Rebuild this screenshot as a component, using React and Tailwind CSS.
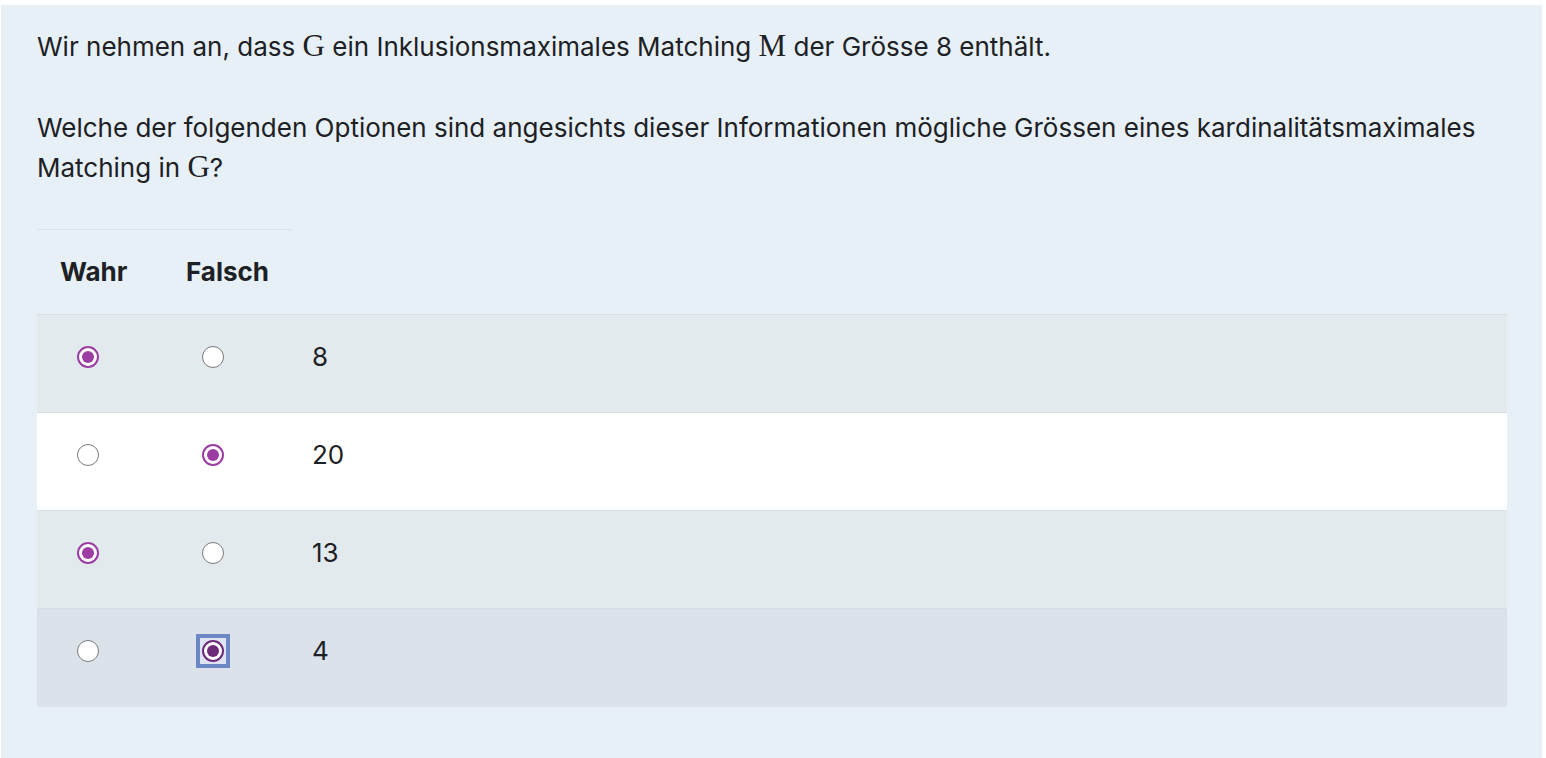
import React from "react";

const rows = [
  { label: "8", value: "wahr", bg: "bg-[#e2eaee]" },
  { label: "20", value: "falsch", bg: "bg-white" },
  { label: "13", value: "wahr", bg: "bg-[#e2eaee]" },
  { label: "4", value: "falsch", bg: "bg-[#dbe2ea]", focus: true },
];

const Math = ({ children }) => (
  <span className="font-['Liberation_Serif',serif] text-[31px] leading-none">{children}</span>
);

const Radio = ({ checked, focus }) => {
  if (!checked) {
    return <span className="block w-[22px] h-[22px] rounded-full border-[1.5px] border-[#7a7a7a] bg-white" />;
  }
  const dot = (
    <span
      className={
        "flex items-center justify-center w-[22px] h-[22px] rounded-full border-2 bg-white " +
        (focus ? "border-[#6c2a79]" : "border-[#9b3da3]")
      }
    >
      <span className={"block w-[12px] h-[12px] rounded-full " + (focus ? "bg-[#6c2a79]" : "bg-[#9b3da3]")} />
    </span>
  );
  if (focus) {
    return (
      <span className="flex items-center justify-center w-[34px] h-[34px] bg-[#6b87c4]">
        <span className="flex items-center justify-center w-[26px] h-[26px] bg-[#dfe4f3]">{dot}</span>
      </span>
    );
  }
  return dot;
};

export default function App() {
  return (
    <div className="min-h-[758px] bg-white pt-[5px] pl-[1px] pr-[4px] font-['Inter',sans-serif] text-[#1d2125]">
      <div className="bg-[#e7f0f6] min-h-[753px] pl-[36px] pr-[35px] pt-[22px] text-[26px] leading-[40px]">
        <p>
          Wir nehmen an, dass <Math>G</Math> ein Inklusionsmaximales Matching <Math>M</Math> der Grösse 8 enthält.
        </p>
        <p className="mt-[41px]">
          Welche der folgenden Optionen sind angesichts dieser Informationen mögliche Grössen eines kardinalitätsmaximales
          Matching in <Math>G</Math>?
        </p>

        <table className="mt-[41px] w-full border-collapse">
          <thead>
            <tr>
              <th className="w-[113px] h-[85px] border-t border-[#dbe3e8] text-left pl-[23px] font-bold">Wahr</th>
              <th className="w-[142px] h-[85px] border-t border-[#dbe3e8] text-left pl-[36px] font-bold">Falsch</th>
              <th />
            </tr>
          </thead>
          <tbody>
            {rows.map((r) => (
              <tr key={r.label} className={r.bg + " border-t border-[#d6dee3]"}>
                <td className="h-[98px] pb-[14px]">
                  <div className="flex justify-start pl-[40px]">
                    <Radio checked={r.value === "wahr"} />
                  </div>
                </td>
                <td className="pb-[14px]">
                  <div className={"flex " + (r.focus ? "pl-[46px]" : "pl-[52px]")}>
                    <Radio checked={r.value === "falsch"} focus={r.focus} />
                  </div>
                </td>
                <td className="pl-[20px] pb-[14px]">{r.label}</td>
              </tr>
            ))}
          </tbody>
        </table>
      </div>
    </div>
  );
}
